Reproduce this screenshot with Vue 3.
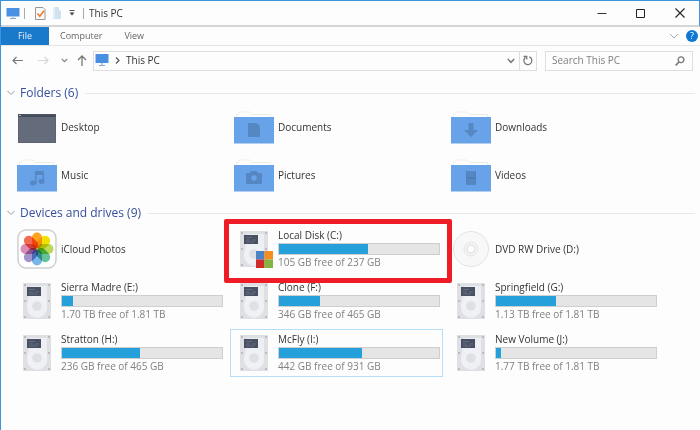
<script setup>
import { ref } from 'vue'

const search = ref('')

const folders = [
  { name: 'Desktop', icon: 'desktop' },
  { name: 'Documents', icon: 'document' },
  { name: 'Downloads', icon: 'download' },
  { name: 'Music', icon: 'music' },
  { name: 'Pictures', icon: 'camera' },
  { name: 'Videos', icon: 'film' },
]

const drives = [
  { name: 'iCloud Photos', icon: 'photos' },
  { name: 'Local Disk (C:)', icon: 'disk', used: 55.5, detail: '105 GB free of 237 GB', system: true, marked: true },
  { name: 'DVD RW Drive (D:)', icon: 'dvd' },
  { name: 'Sierra Madre (E:)', icon: 'disk', used: 7, detail: '1.70 TB free of 1.81 TB' },
  { name: 'Clone (F:)', icon: 'disk', used: 25.6, detail: '346 GB free of 465 GB' },
  { name: 'Springfield (G:)', icon: 'disk', used: 37.6, detail: '1.13 TB free of 1.81 TB' },
  { name: 'Stratton (H:)', icon: 'disk', used: 49, detail: '236 GB free of 465 GB' },
  { name: 'McFly (I:)', icon: 'disk', used: 51.8, detail: '442 GB free of 931 GB', focused: true },
  { name: 'New Volume (J:)', icon: 'disk', used: 3, detail: '1.77 TB free of 1.81 TB' },
]

const petals = [
  { angle: 0, color: '#fba51f' },
  { angle: 45, color: '#f3e000' },
  { angle: 90, color: '#b9d957' },
  { angle: 135, color: '#62c39b' },
  { angle: 180, color: '#78b5e8' },
  { angle: 225, color: '#a293ca' },
  { angle: 270, color: '#dc8bb5' },
  { angle: 315, color: '#f56b52' },
]
</script>

<template>
  <div class="window">
    <header class="titlebar">
      <svg class="pc" viewBox="0 0 14 13" aria-hidden="true">
        <path d="M0.5 1h13v8.500h-13z" fill="#4a90e2" />
        <path d="M6 9.500h2V11H6z" fill="#b5c9e0" />
        <path d="M4 11h6v1H4z" fill="#8fa9c8" />
      </svg>
      <span class="divider first"></span>
      <button class="quick" type="button" aria-label="Properties">
        <svg width="11" height="13" viewBox="0 0 11 13">
          <path d="M0.5 0.5h7.500l2 2v10h-9.500z" fill="#fafafa" stroke="#999" />
          <path d="M2.500 6.500l2.300 2.800L9 3.800" fill="none" stroke="#f0782a" stroke-width="1.500" />
        </svg>
      </button>
      <button class="quick" type="button" aria-label="New folder">
        <svg width="9" height="12" viewBox="0 0 9 12">
          <path d="M1 0h5v3l2 1v8H0V1z" fill="#cfe2f0" />
          <path d="M1 0h1v12H0V1z" fill="#e2eef7" />
        </svg>
      </button>
      <button class="quick" type="button" aria-label="Customize toolbar">
        <svg width="6" height="6" viewBox="0 0 6 6">
          <path d="M0.500 0.500h5" stroke="#555" />
          <path d="M0.500 2.500h5L3 5.500z" fill="#444" />
        </svg>
      </button>
      <span class="divider last"></span>
      <h1>This PC</h1>
      <div class="controls">
        <button type="button" aria-label="Minimize">
          <svg width="10" height="10" viewBox="0 0 10 10"><path d="M0.500 5.500h9" stroke="#333" /></svg>
        </button>
        <button type="button" aria-label="Maximize">
          <svg width="10" height="10" viewBox="0 0 10 10"><path d="M0.500 1.500h8v8h-8z" fill="none" stroke="#222" /></svg>
        </button>
        <button type="button" aria-label="Close">
          <svg width="10" height="10" viewBox="0 0 10 10"><path d="M0.500 0.500l9 9M9.500 0.500l-9 9" stroke="#222" stroke-width="1.100" /></svg>
        </button>
      </div>
    </header>

    <nav class="ribbon">
      <a class="tab active" href="#file">File</a>
      <a class="tab" href="#computer">Computer</a>
      <a class="tab" href="#view">View</a>
      <button class="expand" type="button" aria-label="Expand the ribbon">
        <svg width="10" height="6" viewBox="0 0 10 6"><path d="M1 1l4 4 4-4" fill="none" stroke="#aaa" /></svg>
      </button>
      <button class="help" type="button" aria-label="Help">?</button>
    </nav>

    <div class="toolbar">
      <button class="arrow" type="button" aria-label="Back">
        <svg width="11" height="9" viewBox="0 0 11 9"><path d="M0.800 4.500h10M4.500 1L1 4.500 4.500 8" fill="none" stroke="#777" stroke-width="1.200" /></svg>
      </button>
      <button class="arrow forward" type="button" aria-label="Forward">
        <svg width="11" height="9" viewBox="0 0 11 9"><path d="M0 4.500h10M6.500 1L10 4.500 6.500 8" fill="none" stroke="#d6d6d6" stroke-width="1.200" /></svg>
      </button>
      <button class="arrow recent" type="button" aria-label="Recent locations">
        <svg width="7" height="5" viewBox="0 0 7 5"><path d="M0.800 1l2.700 2.700L6.200 1" fill="none" stroke="#888" stroke-width="1.200" /></svg>
      </button>
      <button class="arrow up" type="button" aria-label="Up">
        <svg width="10" height="11" viewBox="0 0 10 11"><path d="M5 1v10M1 5l4-4 4 4" fill="none" stroke="#777" stroke-width="1.300" /></svg>
      </button>
      <div class="address">
        <svg class="pc" viewBox="0 0 14 13" aria-hidden="true">
          <path d="M0.5 0h13v9h-13z" fill="#4a90e2" />
          <path d="M6 9h2v2H6z" fill="#b5c9e0" />
          <path d="M4 11h6v1H4z" fill="#8fa9c8" />
        </svg>
        <svg width="5" height="7" viewBox="0 0 5 7" aria-hidden="true"><path d="M1 0.500l3 3-3 3" fill="none" stroke="#555" stroke-width="1.200" /></svg>
        <a href="#this-pc">This PC</a>
        <button class="history" type="button" aria-label="Previous locations">
          <svg width="8" height="6" viewBox="0 0 8 6"><path d="M0.800 1L4 4.300 7.200 1" fill="none" stroke="#777" stroke-width="1.500" /></svg>
        </button>
        <button class="refresh" type="button" aria-label="Refresh">
          <svg width="10" height="11" viewBox="0 0 10 11">
            <path d="M6.300 1.900a4 4 0 1 1-3.800 0.500" fill="none" stroke="#777" stroke-width="1.300" />
            <path d="M0.500 1.300h3.300v3.300" fill="none" stroke="#777" stroke-width="1.200" />
          </svg>
        </button>
      </div>
      <div class="search">
        <input v-model="search" type="text" placeholder="Search This PC" aria-label="Search This PC" />
        <svg width="10" height="10" viewBox="0 0 10 10" aria-hidden="true">
          <circle cx="6" cy="3.700" r="2.900" fill="none" stroke="#777" stroke-width="1.300" />
          <path d="M4 6L0.700 9.300" stroke="#777" stroke-width="1.700" />
        </svg>
      </div>
    </div>

    <main>
      <section class="group">
        <h2>
          <svg width="8" height="6" viewBox="0 0 8 6" aria-hidden="true"><path d="M0.500 1L4 4.500 7.500 1" fill="none" stroke="#999" /></svg>
          <span>Folders (6)</span>
        </h2>
        <ul class="tiles folders">
          <li v-for="folder in folders" :key="folder.name" class="tile">
            <svg class="icon" viewBox="0 0 40 36" aria-hidden="true">
              <g v-if="folder.icon === 'desktop'">
                <path d="M1 5h38v29H1z" fill="#646b7a" />
                <path d="M1 5h38v3H1z" fill="#454d5b" />
                <path d="M2 6h2v1H2z" fill="#aab0ba" />
                <path d="M1.500 5.500h37v28h-37z" fill="none" stroke="#555c6a" stroke-opacity="0.500" />
              </g>
              <g v-else>
                <path d="M2.500 8.500V5.500H4l1.500-2.500h10.500l2 2.500h18.500v3" fill="#fff" stroke="#ececec" />
                <path d="M0 8h40v26.500H0z" fill="#68a2e8" />
                <g fill="#5587c2" transform="translate(0 1)">
                  <path v-if="folder.icon === 'document'" d="M14 13h8l4 4v10H14zM23 13l3 3h-3z" />
                  <path v-if="folder.icon === 'download'" d="M17.500 13h5v7H27l-7 7-7-7h4.500z" />
                  <g v-if="folder.icon === 'music'">
                    <path d="M18 13h9v11h-1.500v-7h-6v9H18z" />
                    <ellipse cx="16" cy="25" rx="3" ry="2.400" />
                    <ellipse cx="24.500" cy="23.500" rx="3" ry="2.400" />
                  </g>
                  <g v-if="folder.icon === 'camera'">
                    <path d="M13 15h3l1-2h6l1 2h3a1 1 0 0 1 1 1v9a1 1 0 0 1-1 1H13a1 1 0 0 1-1-1v-9a1 1 0 0 1 1-1z" />
                    <circle cx="20" cy="20" r="2.800" fill="#68a2e8" />
                  </g>
                  <g v-if="folder.icon === 'film'">
                    <path d="M15 13h10v14H15z" />
                    <path d="M16 20h8" stroke="#4677b2" />
                    <path d="M15.500 13v14M24.500 13v14" stroke="#4b7dba" stroke-dasharray="1 1" />
                  </g>
                </g>
              </g>
            </svg>
            <span class="name">{{ folder.name }}</span>
          </li>
        </ul>
      </section>

      <section class="group">
        <h2>
          <svg width="8" height="6" viewBox="0 0 8 6" aria-hidden="true"><path d="M0.500 1L4 4.500 7.500 1" fill="none" stroke="#999" /></svg>
          <span>Devices and drives (9)</span>
        </h2>
        <ul class="tiles">
          <li v-for="drive in drives" :key="drive.name" class="tile" :class="{ focused: drive.focused, marked: drive.marked }">
            <svg class="icon" viewBox="0 0 40 40" aria-hidden="true">
              <g v-if="drive.icon === 'photos'">
                <rect x="1" y="1" width="38" height="38" rx="8" fill="#fff" stroke="#cfcfcf" stroke-width="1.500" />
                <g class="flower">
                  <rect
                    v-for="petal in petals"
                    :key="petal.angle"
                    x="15" y="3.500" width="10" height="16" rx="5"
                    :fill="petal.color"
                    :transform="`rotate(${petal.angle} 20 20)`"
                  />
                </g>
              </g>
              <g v-else-if="drive.icon === 'dvd'">
                <circle cx="20" cy="20" r="17.500" fill="#f8f8f8" stroke="#e3e3e3" />
                <circle cx="20" cy="20" r="7" fill="#f3f3f3" stroke="#e6e6e6" />
                <circle cx="20" cy="20" r="4" fill="#fff" stroke="#dedede" />
              </g>
              <g v-else>
                <path d="M6 2h28v36H6z" fill="#dfe0e4" />
                <path d="M13 5h17v20a10 10 0 1 1-19.500-1z" fill="#eeeff3" />
                <circle cx="20" cy="25" r="10" fill="#f0f1f5" />
                <circle cx="20" cy="25" r="4.800" fill="#dfe0e5" />
                <path d="M10 6h14v9H10z" fill="#485063" />
                <path d="M12 8.500h6M12 11h4M18 11h4M12 13h8" stroke="#7d8494" stroke-opacity="0.600" />
                <g fill="#aeb0b6">
                  <circle cx="8" cy="4" r="1" /><circle cx="32" cy="4" r="1" />
                  <circle cx="8" cy="20" r="1" /><circle cx="32" cy="20" r="1" />
                  <circle cx="8" cy="36" r="1" /><circle cx="32" cy="36" r="1" />
                </g>
                <g v-if="drive.system">
                  <path d="M22 22h8.500v8.500H22z" fill="#4b83c4" />
                  <path d="M30.500 22H39v8.500h-8.500z" fill="#f68b1f" />
                  <path d="M22 30.500h8.500V39H22z" fill="#cf2a2c" />
                  <path d="M30.500 30.500H39V39h-8.500z" fill="#84b440" />
                </g>
              </g>
            </svg>
            <div class="info">
              <span class="name">{{ drive.name }}</span>
              <template v-if="drive.detail">
                <div class="usage" role="progressbar" :aria-label="drive.name" :aria-valuenow="drive.used" aria-valuemin="0" aria-valuemax="100">
                  <div class="used" :style="{ width: drive.used + '%' }"></div>
                </div>
                <span class="detail">{{ drive.detail }}</span>
              </template>
            </div>
          </li>
        </ul>
      </section>
    </main>
  </div>
</template>

<style>
body {
  margin: 0;
  background: #fdfdfd;
}
</style>

<style scoped>
* {
  box-sizing: border-box;
}

.window {
  min-height: 100vh;
  border-top: 1px solid #3b94dc;
  border-left: 1px solid #3b94dc;
  background: #fdfdfd;
  color: #333;
  font-family: 'Open Sans', 'Noto Sans', sans-serif;
  font-size: 10px;
  line-height: 15px;
}

button {
  display: flex;
  align-items: center;
  justify-content: center;
  padding: 0;
  border: 0;
  background: none;
  font: inherit;
}

a {
  color: inherit;
  text-decoration: none;
}

svg {
  display: block;
  flex: none;
}

.pc {
  width: 14px;
  height: 13px;
}

.titlebar {
  display: flex;
  align-items: center;
  height: 26px;
  padding-left: 5px;
  border-right: 1px solid #3b94dc;
  border-bottom: 2px solid #d6d6d6;
}

.divider {
  width: 1px;
  height: 11px;
  background: #aaa;
}

.first {
  margin: 0 10px 0 4px;
}

.last {
  margin: 0 5px 0 8px;
}

.quick + .quick {
  margin-left: 7px;
}

h1 {
  margin: 0;
  font-size: 10px;
  font-weight: 400;
}

.controls {
  display: flex;
  margin-left: auto;
}

.controls button {
  width: 39px;
  height: 24px;
}

.ribbon {
  display: flex;
  align-items: stretch;
  height: 19px;
  padding-right: 2px;
  border-bottom: 1px solid #e4e4e4;
  color: #666;
  font-size: 9px;
}

.tab {
  padding: 0 11px;
  line-height: 18px;
}

.tab.active {
  width: 48px;
  padding: 0;
  background: #1979ca;
  color: #e4f0fa;
  text-align: center;
}

.expand {
  margin: 0 7px 0 auto;
}

.help {
  align-self: center;
  width: 12px;
  height: 12px;
  border-radius: 50%;
  background: #0f78d4;
  color: #fff;
  line-height: 12px;
}

.toolbar {
  display: flex;
  align-items: center;
  height: 29px;
  padding: 0 7px 0 11px;
}

.forward {
  margin-left: 15px;
}

.recent {
  margin-left: 12px;
}

.up {
  margin: 0 6px 0 9px;
}

.address {
  display: flex;
  flex: 1;
  align-items: center;
  height: 20px;
  padding-left: 1px;
  border: 1px solid #dedede;
}

.address a {
  margin-left: 6px;
}

.pc + svg {
  margin-left: 6px;
}

.history {
  width: 16px;
  margin-left: auto;
}

.refresh {
  width: 17px;
  height: 18px;
  border-left: 1px solid #dedede;
}

.search {
  display: flex;
  align-items: center;
  width: 148px;
  height: 20px;
  margin-left: 8px;
  padding: 0 7px 0 6px;
  border: 1px solid #dedede;
}

.search input {
  flex: 1;
  min-width: 0;
  padding: 0;
  border: 0;
  outline: 0;
  background: none;
  color: #333;
  font: inherit;
}

.search input::placeholder {
  color: #808080;
  opacity: 1;
}

main {
  padding: 9px 5px 0 6px;
}

h2 {
  display: flex;
  align-items: center;
  gap: 5px;
  margin: 0;
  color: #35509c;
  font-size: 12px;
  font-weight: 400;
  line-height: 18px;
}

h2::after {
  flex: 1;
  height: 1px;
  margin-left: 2px;
  background: #e8e8e8;
  content: '';
}

.tiles {
  display: grid;
  grid-template-columns: repeat(auto-fill, 213px);
  gap: 4px;
  margin: 0;
  padding: 3px 0 5px 6px;
  list-style: none;
}

.tile {
  position: relative;
  display: flex;
  align-items: center;
  gap: 4px;
  height: 48px;
  padding: 0 2px 0 3px;
  border: 1px solid transparent;
}

.folders .tile {
  height: 44px;
}

.folders {
  padding-bottom: 7px;
}

.focused {
  border-color: #b5ddf8;
}

.marked {
  z-index: 1;
}

.marked::after {
  position: absolute;
  inset: -7px -10px -11px -7px;
  border: 5px solid #ee1c25;
  border-radius: 2px;
  content: '';
}

.icon {
  width: 40px;
}

.flower rect {
  mix-blend-mode: multiply;
}

.info {
  display: flex;
  flex: 1;
  flex-direction: column;
}

.usage {
  height: 12px;
  border: 1px solid #cfcfcf;
  background: #e5e5e5;
}

.used {
  height: 100%;
  background: #26a0da;
}

.detail {
  color: #808080;
}
</style>
